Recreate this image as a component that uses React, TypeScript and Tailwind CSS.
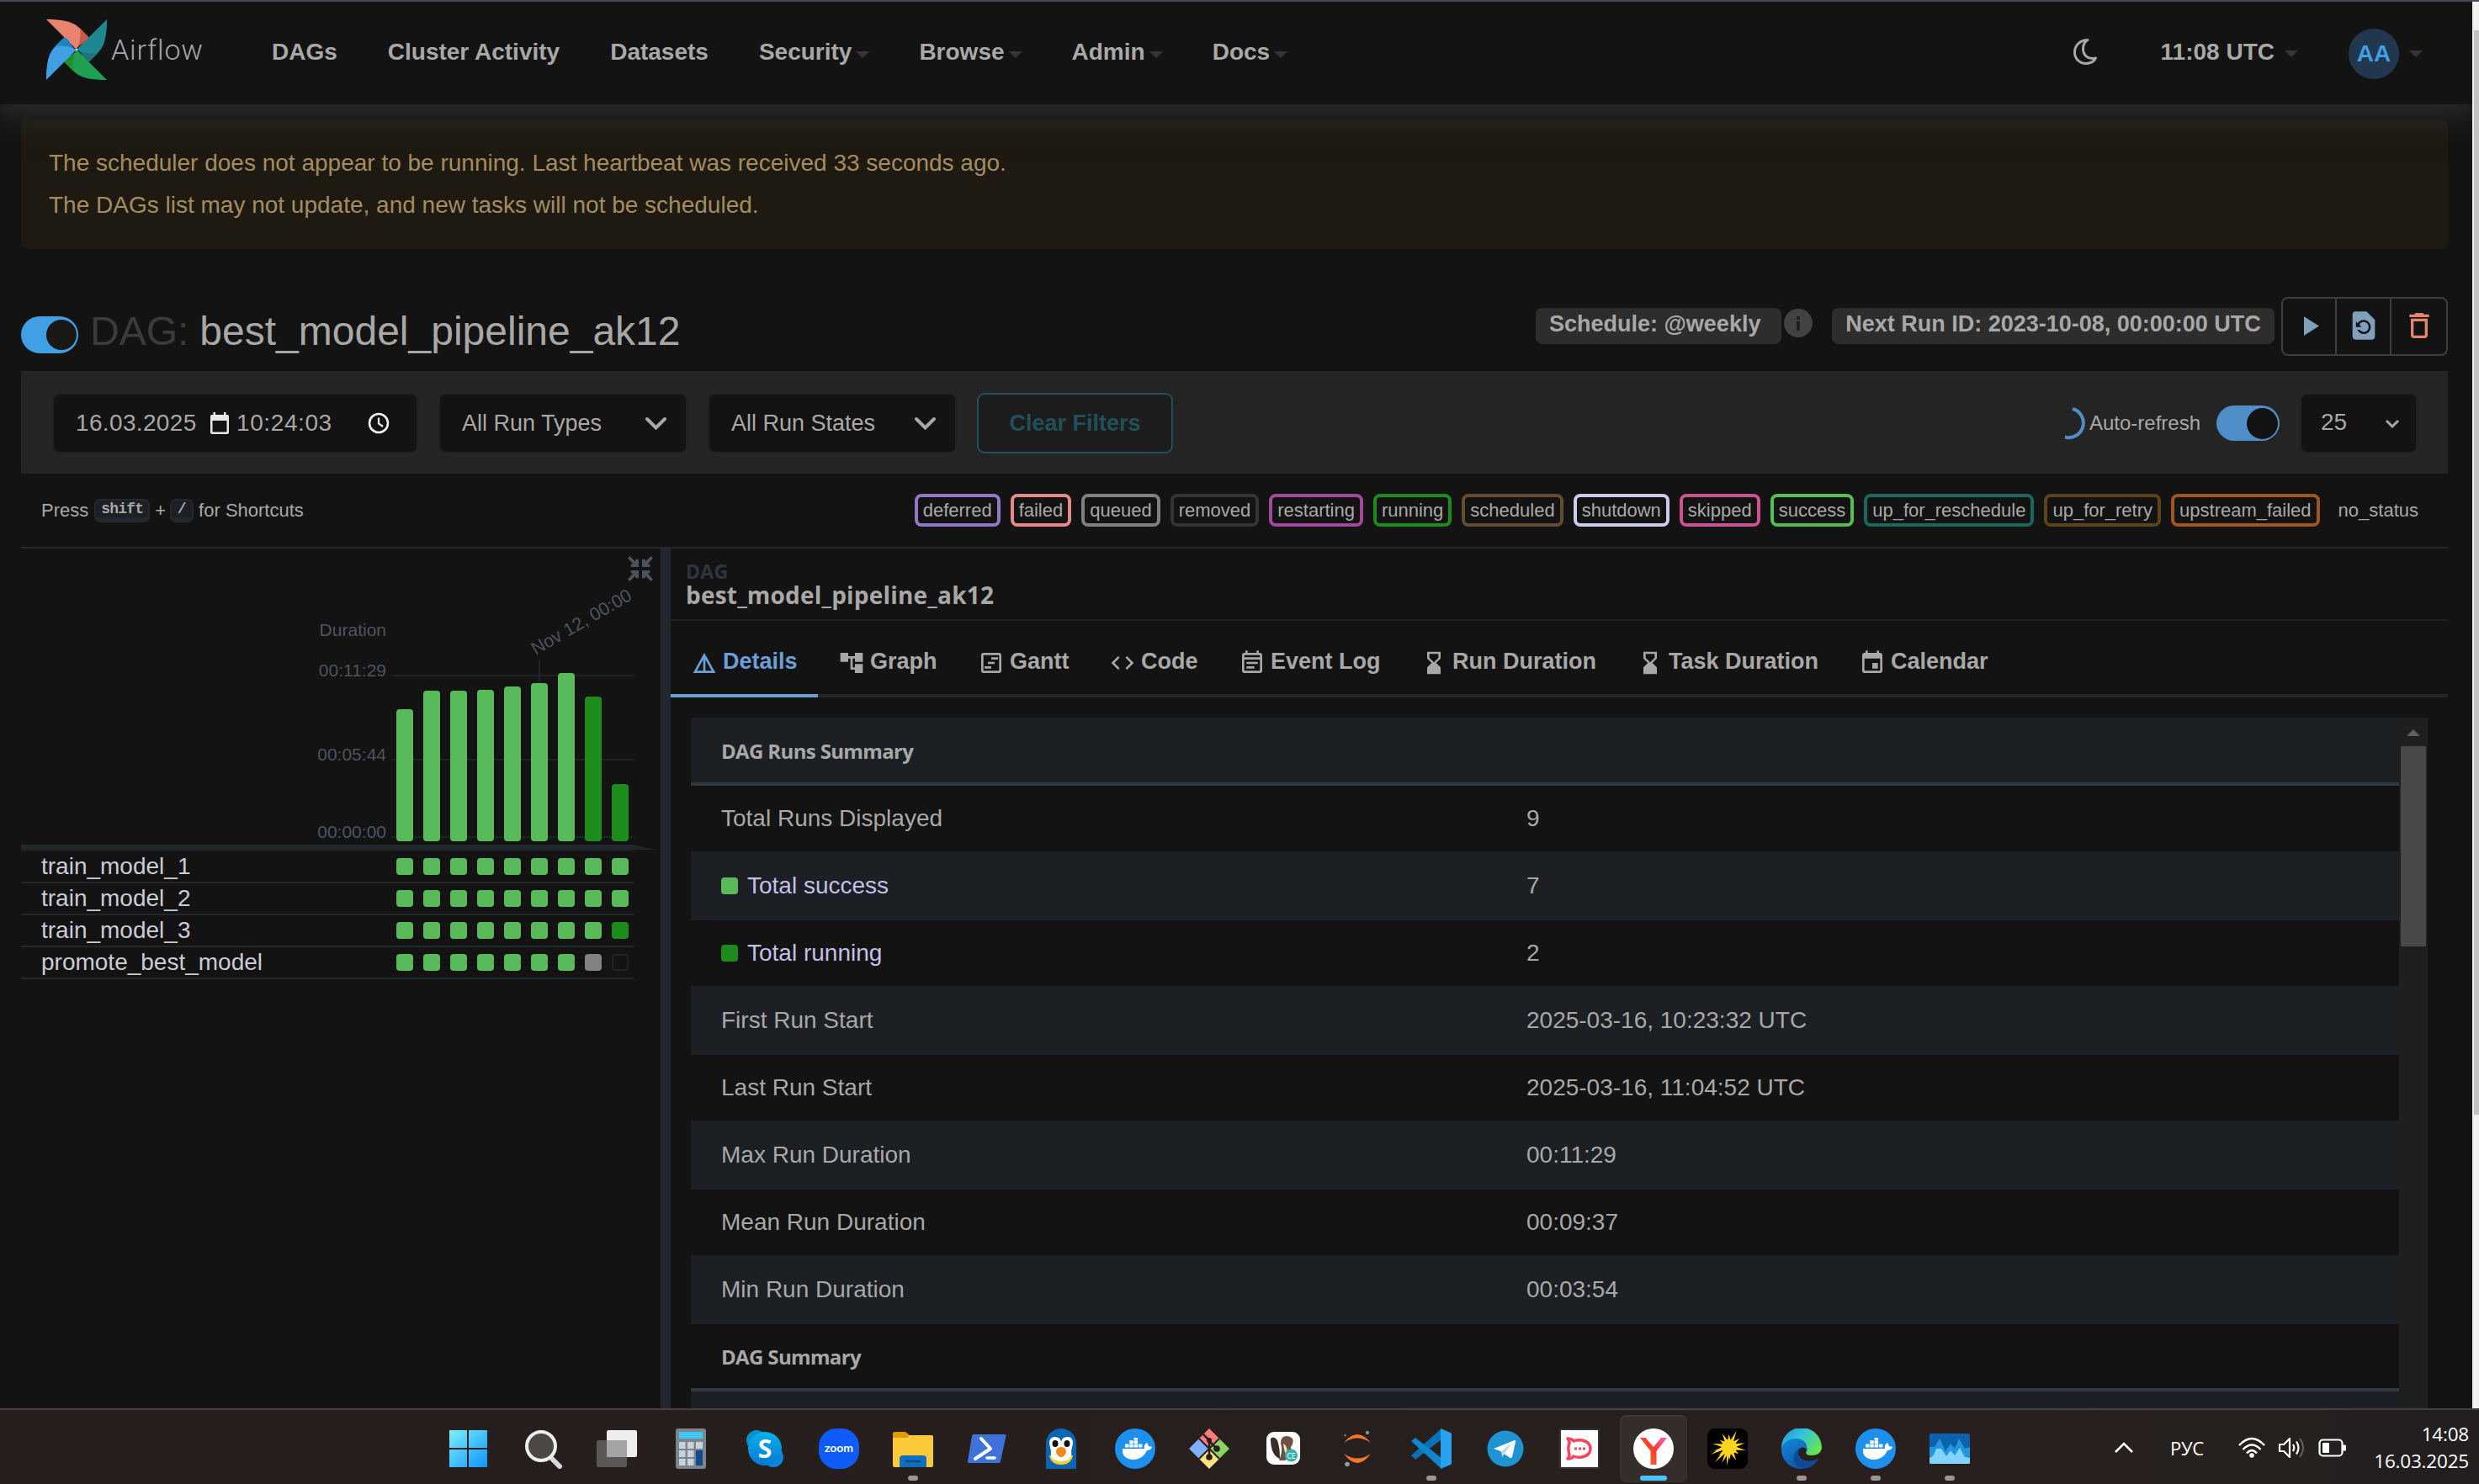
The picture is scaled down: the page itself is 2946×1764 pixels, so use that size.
import React from "react";
import {
  MdPlayArrow,
  MdRestorePage,
  MdDeleteOutline,
  MdDetails,
  MdAccountTree,
  MdOutlineViewTimeline,
  MdCode,
  MdOutlineEventNote,
  MdHourglassBottom,
  MdEvent,
} from "react-icons/md";

const SUCCESS = "#5aba5a";
const RUNNING = "#1e8c1c";

function AirflowLogo() {
  const blade = (light: string, dark: string, angle: number) => (
    <g transform={`rotate(${angle} 36 36)`}>
      <path d="M0 0C18 0 30 2 38 9C44 15 47 18 50 21C50 28 38 28 36 36L21 21Z" fill={light} />
      <path d="M40 10.500C44 14 48 19 50.500 21C50 28 39 28 36 36C40 29 41.500 19 40 10.500Z" fill={dark} />
    </g>
  );
  return (
    <svg className="h-[72px] w-[72px]" viewBox="0 0 72 72">
      {blade("#e8836f", "#c65b46", 0)}
      {blade("#1e8890", "#1d727b", 90)}
      {blade("#1fa052", "#1e8f2c", 180)}
      {blade("#419fe6", "#1f84c6", 270)}
      <circle cx="36" cy="36" r="1.500" fill="#c9c4bd" />
    </svg>
  );
}

function Caret({ className = "" }: { className?: string }) {
  return (
    <span
      className={`h-0 w-0 border-x-8 border-t-8 border-x-transparent border-t-[#3c303e] ${className}`}
    />
  );
}

const NAV = [
  { label: "DAGs", caret: false },
  { label: "Cluster Activity", caret: false },
  { label: "Datasets", caret: false },
  { label: "Security", caret: true },
  { label: "Browse", caret: true },
  { label: "Admin", caret: true },
  { label: "Docs", caret: true },
];

function Header() {
  return (
    <header className="relative z-10 flex h-[122px] w-[2938px] shrink-0 bg-[#131313] shadow-[0_0_40px_8px_#313131] [clip-path:inset(0_0_-80px_0)]">
      <div className="flex h-[118px] items-center pl-[55px] text-[28px] font-bold text-[#a9a8a6]">
        <div className="flex w-[238px] items-center">
          <div className="-mt-1">
            <AirflowLogo />
          </div>
          <span className="-mt-[4px] ml-[5px] font-[Roboto] text-[34px] font-light tracking-[0.800px]">Airflow</span>
        </div>
        <nav className="mt-[2px] flex">
          {NAV.map((n) => (
            <div key={n.label} className="flex items-center px-[30px]">
              {n.label}
              {n.caret && <Caret className="-mr-px ml-[5px] mt-1.5" />}
            </div>
          ))}
        </nav>
      </div>
      <div className="ml-auto flex h-[118px] items-center pr-[59px] text-[28px] font-bold text-[#a9a8a6]">
        <svg className="h-[33px] w-[30px]" viewBox="0 0 30 33">
          <path
            d="M18 2.500C9 2.500 2.500 9 2.500 17C2.500 25 8.500 30.500 16 30.500C21 30.500 25.500 28 27.500 24C18 26.500 12.500 20 12.500 13C12.500 8 14.500 4.500 18 2.500Z"
            fill="none"
            stroke="#a9a8a6"
            strokeWidth="3"
            strokeLinejoin="round"
          />
        </svg>
        <span className="ml-[75px] mt-[2px]">11:08 UTC</span>
        <Caret className="ml-[12px] mt-1.5" />
        <div className="ml-[60px] mt-1.5 flex h-[60px] w-[60px] items-center justify-center rounded-full bg-[#21374e] text-[28px] text-[#419fe6]">
          <span>AA</span>
        </div>
        <Caret className="ml-[12px] mt-1.5" />
      </div>
    </header>
  );
}

function TitleRow() {
  return (
    <div className="flex h-[145px] shrink-0 items-start">
      <div className="mt-[80px] flex h-[44px] w-[68px] items-center justify-end rounded-full bg-[#419fe6] pr-[2px]">
        <div className="h-[36px] w-[36px] rounded-full bg-[#1a1814]" />
      </div>
      <h1 className="ml-[14px] mt-[70px] flex gap-[13px] text-[48px] leading-[56px] text-[#a9a8a6]">
        <span className="text-[#3b3b3b]">DAG:</span>
        <span>best_model_pipeline_ak12</span>
      </h1>
      <div className="ml-auto flex items-start text-[27px] font-bold text-[#a9a8a6]">
        <div className="mt-[70px] flex h-[43px] w-[292px] items-center rounded-[8px] bg-[#2d2d2d] pb-1 pl-[16px]">
          Schedule: @weekly
        </div>
        <div className="ml-[3px] mt-[71px] flex h-[34px] w-[34px] flex-col items-center justify-center gap-[2px] rounded-full bg-[#424242]">
          <span className="h-[4px] w-[4px] bg-[#1f1f1f]" />
          <span className="h-[11px] w-[4px] bg-[#1f1f1f]" />
        </div>
        <div className="ml-[23px] mt-[70px] flex h-[43px] w-[526px] items-center justify-center rounded-[8px] bg-[#2d2d2d] pb-1">
          Next Run ID: 2023-10-08, 00:00:00 UTC
        </div>
        <div className="ml-[8px] mt-[57px] flex h-[70px] w-[198px] divide-x-2 divide-[#3e3e3e] rounded-[8px] border-2 border-[#3e3e3e]">
          <div className="flex w-[64px] items-center justify-center pb-[2px] text-[#7f9fbb]">
            <MdPlayArrow className="h-[39px] w-[39px]" />
          </div>
          <div className="flex w-[65px] items-center justify-center pb-[2px] text-[#7f9fbb]">
            <MdRestorePage className="h-[40px] w-[40px]" />
          </div>
          <div className="flex flex-1 items-center justify-center pb-[2px] text-[#e8836f]">
            <MdDeleteOutline className="h-[40px] w-[40px]" />
          </div>
        </div>
      </div>
    </div>
  );
}

function SelectBox({ label, className }: { label: string; className: string }) {
  return (
    <div
      className={`flex h-[72px] items-center justify-between rounded-[9px] border-2 border-[#1e2328] bg-[#131313] pl-[26px] pr-[22px] text-[27px] ${className}`}
    >
      {label}
      <svg className="h-[17px] w-[27px]" viewBox="0 0 27 17">
        <path d="M3 3L13.500 13.500L24 3" fill="none" stroke="#a9a8a6" strokeWidth="4" strokeLinecap="round" />
      </svg>
    </div>
  );
}

function FilterBar() {
  return (
    <div className="flex h-[122px] shrink-0 items-center border-t-2 border-[#22272c] bg-[#242424] pl-[37px] pr-[36px] text-[28px] text-[#a9a8a6]">
      <div className="flex h-[72px] w-[435px] items-center rounded-[9px] border-2 border-[#1e2328] bg-[#131313] pl-[26px]">
        <span className="w-[160px] tracking-[0.350px]">16.03.2025</span>
        <svg className="h-[26px] w-[22px]" viewBox="0 0 22 26">
          <path d="M2 3H20Q22 3 22 5V24Q22 26 20 26H2Q0 26 0 24V5Q0 3 2 3ZM2.500 10V23.500H19.500V10Z" fillRule="evenodd" fill="#e8e8e8" />
          <path d="M3.500 0H6V4H3.500ZM16 0H18.500V4H16Z" fill="#e8e8e8" />
        </svg>
        <span className="ml-[9px] w-[156px] tracking-[0.600px]">10:24:03</span>
        <svg className="h-[26px] w-[26px]" viewBox="0 0 26 26">
          <circle cx="13" cy="13" r="11" fill="none" stroke="#f0f0f0" strokeWidth="2.600" />
          <path d="M13 6.500V13.500L18 17" fill="none" stroke="#f0f0f0" strokeWidth="2.200" />
        </svg>
      </div>
      <SelectBox label="All Run Types" className="ml-[24px] w-[296px]" />
      <SelectBox label="All Run States" className="ml-[24px] w-[296px]" />
      <button className="ml-[24px] h-[72px] w-[233px] rounded-[9px] border-2 border-[#20525c] bg-[#1c1c1c] text-[27px] font-bold text-[#20505a]">
        Clear Filters
      </button>
      <div className="ml-auto flex items-center">
        <svg className="mr-[4px] h-[40px] w-[30px]" viewBox="0 0 30 40">
          <path d="M14 3A17 17 0 0 1 5 36.500" fill="none" stroke="#4f8ec9" strokeWidth="4" />
        </svg>
        <span className="text-[24px]">Auto-refresh</span>
        <div className="ml-[19px] flex h-[42px] w-[75px] items-center justify-end rounded-full bg-[#4f8ec9] pr-[2px]">
          <div className="h-[37px] w-[37px] rounded-full bg-[#131313]" />
        </div>
        <div className="ml-[24px] flex h-[72px] w-[140px] items-center justify-between rounded-[9px] border-2 border-[#1e2328] bg-[#131313] pb-0.5 pl-[23px] pr-[19px]">
          25
          <svg className="mt-1 h-[12px] w-[18px]" viewBox="0 0 18 12">
            <path d="M2 2L9 9L16 2" fill="none" stroke="#a9a8a6" strokeWidth="3" />
          </svg>
        </div>
      </div>
    </div>
  );
}

const STATES = [
  ["deferred", "border-[#9077c8]"],
  ["failed", "border-[#e78b8a]"],
  ["queued", "border-[#808080]"],
  ["removed", "border-[#343434]"],
  ["restarting", "border-[#a14a9d]"],
  ["running", "border-[#1e8c1c]"],
  ["scheduled", "border-[#644c2f]"],
  ["shutdown", "border-[#cccdec]"],
  ["skipped", "border-[#c9528f]"],
  ["success", "border-[#57bd57]"],
  ["up_for_reschedule", "border-[#1c665b]"],
  ["up_for_retry", "border-[#5e4219]"],
  ["upstream_failed", "border-[#a0561c]"],
  ["no_status", "border-transparent"],
];

function Legend() {
  return (
    <div className="flex h-[87px] shrink-0 items-center pl-[24px] pr-[25px] text-[22px] text-[#a9a8a6]">
      <span>Press</span>
      <kbd className="ml-[7px] flex h-[28px] w-[66px] items-center justify-center rounded-[7px] border-2 border-b-[6px] border-[#22282e] bg-[#1c1f25] font-['Liberation_Mono'] text-[18px] font-bold leading-none tracking-[-0.800px]">
        shift
      </kbd>
      <span className="ml-[6px]">+</span>
      <kbd className="ml-[5px] flex h-[28px] w-[28px] items-center justify-center rounded-[7px] border-2 border-b-[6px] border-[#22282e] bg-[#1c1f25] font-['Liberation_Mono'] text-[18px] font-bold leading-none">
        /
      </kbd>
      <span className="ml-[6px]">for Shortcuts</span>
      <div className="ml-auto flex gap-[12px]">
        {STATES.map(([name, border]) => (
          <span key={name} className={`flex h-[39px] items-center rounded-[8px] border-4 px-[6px] ${border}`}>
            {name}
          </span>
        ))}
      </div>
    </div>
  );
}

const BAR_TOPS = [191, 169, 169, 168, 164, 160, 148, 176, 280];

function DurationChart() {
  return (
    <svg className="block h-[360px] w-[760px] shrink-0 font-['Liberation_Sans']" viewBox="0 0 760 360">
      <g fill="#4a545f">
        {[0, 1, 2, 3].map((i) => (
          <path
            key={i}
            transform={`translate(736 24) scale(${i % 2 ? -1 : 1} ${i > 1 ? -1 : 1})`}
            d="M-15 -12.500L-12.500 -15L-6 -8.500L-6 -11L-2 -11.500V-2H-11.500L-11 -5.500L-8.500 -5.500Z"
          />
        ))}
      </g>
      <g fill="#4b5560" fontSize="21" textAnchor="end">
        <text x="434" y="104">Duration</text>
        <text x="434" y="152">00:11:29</text>
        <text x="434" y="252">00:05:44</text>
        <text x="434" y="344">00:00:00</text>
      </g>
      <text transform="translate(611.500 127) rotate(-30)" fill="#4b5560" fontSize="21.500">
        Nov 12, 00:00
      </text>
      <g fill="#1e2328">
        <rect x="440" y="150" width="288" height="2" />
        <rect x="440" y="250" width="288" height="2" />
        <rect x="440" y="342" width="288" height="2" />
        <rect x="615" y="132" width="2" height="30" />
      </g>
      {BAR_TOPS.map((top, i) => (
        <rect key={i} x={446 + i * 32} y={top} width="20" height={348 - top} rx="4" fill={i < 7 ? SUCCESS : RUNNING} />
      ))}
      <path d="M0 352H728Q745 357 758 358H0Z" fill="#22272e" />
      <rect x="0" y="358" width="728" height="2" fill="#1a1d21" />
    </svg>
  );
}

const G = "bg-[#5aba5a]";
const TASKS = [
  { name: "train_model_1", last: [G, G] },
  { name: "train_model_2", last: [G, G] },
  { name: "train_model_3", last: [G, "bg-[#1e8c1c]"] },
  { name: "promote_best_model", last: ["bg-[#828282]", "border-2 border-[#202327]"] },
];

function GridPanel() {
  return (
    <div className="flex w-[760px] shrink-0 flex-col">
      <DurationChart />
      {TASKS.map((t) => (
        <div key={t.name} className="flex h-[38px] w-[728px] shrink-0 items-center justify-between border-b-2 border-[#22272e] pl-[24px] pr-[6px]">
          <span className="text-[28px] leading-[32px] text-[#cbcbd6]">{t.name}</span>
          <div className="flex gap-[12px]">
            {[G, G, G, G, G, G, G, ...t.last].map((c, i) => (
              <span key={i} className={`h-[20px] w-[20px] rounded-[4px] ${c}`} />
            ))}
          </div>
        </div>
      ))}
    </div>
  );
}

const TABS = [
  { label: "Details", Icon: MdDetails, width: "w-[175px]" },
  { label: "Graph", Icon: MdAccountTree, width: "w-[166px]" },
  { label: "Gantt", Icon: MdOutlineViewTimeline, width: "w-[156px]" },
  { label: "Code", Icon: MdCode, width: "w-[154px]" },
  { label: "Event Log", Icon: MdOutlineEventNote, width: "w-[216px]" },
  { label: "Run Duration", Icon: MdHourglassBottom, width: "w-[257px]" },
  { label: "Task Duration", Icon: MdHourglassBottom, width: "w-[264px]" },
  { label: "Calendar", Icon: MdEvent, width: "w-[203px]" },
];

const ROWS = [
  { label: "Total Runs Displayed", value: "9" },
  { label: "Total success", value: "7", swatch: "bg-[#5aba5a]" },
  { label: "Total running", value: "2", swatch: "bg-[#1e8c1c]" },
  { label: "First Run Start", value: "2025-03-16, 10:23:32 UTC" },
  { label: "Last Run Start", value: "2025-03-16, 11:04:52 UTC" },
  { label: "Max Run Duration", value: "00:11:29" },
  { label: "Mean Run Duration", value: "00:09:37" },
  { label: "Min Run Duration", value: "00:03:54" },
];

function DetailsPanel() {
  return (
    <div className="flex min-w-0 flex-1 flex-col">
      <div className="h-[86px] shrink-0 border-b-2 border-[#1e1f25] pl-[18px] pt-[12px] font-['Open_Sans'] font-bold">
        <div className="text-[23px] leading-[30px] tracking-[0.300px] text-[#2d363e]">DAG</div>
        <div className="-mt-1 text-[28px] leading-[34px] tracking-[0.200px] text-[#a9a8a6]">best_model_pipeline_ak12</div>
      </div>
      <div className="flex h-[91px] shrink-0 border-b-4 border-[#22272e] text-[27px] font-bold text-[#a9a8a6]">
        {TABS.map(({ label, Icon, width }, i) => (
          <div
            key={label}
            className={`flex h-[91px] shrink-0 items-center border-b-4 pl-[24px] pt-[10px] ${width} ${
              i === 0 ? "border-[#6a9fd8] text-[#6a9fd8]" : "border-transparent"
            }`}
          >
            <Icon className="mt-[3px] h-[32px] w-[32px] shrink-0" />
            <span className="ml-[6px] whitespace-nowrap">{label}</span>
          </div>
        ))}
      </div>
      <div className="flex min-h-0 flex-1 pl-[24px] pr-[24px] pt-[24px]">
        <div className="flex min-w-0 flex-1 flex-col overflow-hidden text-[28px] text-[#a9a8a6]">
          <div className="flex h-[81px] shrink-0 items-center border-b-4 border-[#303840] bg-[#1c1f24] pl-[36px] pt-[2px] font-['Open_Sans'] text-[24px] font-bold tracking-[-0.650px]">
            DAG Runs Summary
          </div>
          {ROWS.map((r, i) => (
            <div
              key={r.label}
              className={`flex h-[80px] shrink-0 items-center border-b-2 border-[#1c1f24] pl-[36px] ${i % 2 ? "bg-[#1c1f24]" : ""}`}
            >
              <div className={`flex w-[957px] items-center ${r.swatch ? "text-[#c3bfe8]" : ""}`}>
                {r.swatch && <span className={`mr-[11px] h-[20px] w-[20px] rounded-[4px] ${r.swatch}`} />}
                {r.label}
              </div>
              <div>{r.value}</div>
            </div>
          ))}
          <div className="flex h-[80px] shrink-0 items-center border-b-4 border-[#303840] pl-[36px] pt-[2px] font-['Open_Sans'] text-[24px] font-bold tracking-[-0.650px]">
            DAG Summary
          </div>
          <div className="h-[80px] shrink-0 bg-[#1c1f24]" />
        </div>
        <div className="flex w-[34px] shrink-0 flex-col items-center bg-[#1f1f1f]">
          <span className="mt-[14px] h-0 w-0 border-x-8 border-b-8 border-x-transparent border-b-[#606060]" />
          <span className="mt-[12px] h-[238px] w-[30px] bg-[#494949]" />
        </div>
      </div>
    </div>
  );
}

function Whale() {
  return (
    <svg viewBox="0 0 48 48">
      <circle cx="24" cy="24" r="24" fill="#1d90ee" />
      <path d="M9 24H35Q34 19 38 17Q40 19 40 21.500Q43 20.500 44 22.500Q42 26 38 26C35 33 29 37 22 37C13 37 8 32 9 24Z" fill="#fff" />
      <path d="M12 18.500h4.500v4H12zM17.300 18.500h4.500v4h-4.500zM22.600 18.500h4.500v4h-4.500zM27.900 18.500h4.500v4h-4.500zM17.300 14.300h4.500v3.600h-4.500zM22.600 14.300h4.500v3.600h-4.500zM22.600 11h4.500v2.700h-4.500z" fill="#fff" />
    </svg>
  );
}

const rays = Array.from({ length: 14 }, (_, i) => {
  const a = (i / 14) * Math.PI * 2 + 0.2;
  const r = [20, 14, 18, 15, 21, 16, 19][i % 7];
  const p = (ang: number, rad: number) => `${(26 + Math.cos(ang) * rad).toFixed(1)} ${(22 + Math.sin(ang) * rad).toFixed(1)}`;
  return `M${p(a - 0.3, 7)}L${p(a, r)}L${p(a + 0.3, 7)}Z`;
}).join("");

const APPS: { name: string; running?: boolean; active?: boolean; icon: React.ReactNode }[] = [
  {
    name: "Start",
    icon: (
      <svg viewBox="0 0 48 48">
        <defs>
          <linearGradient id="win" x1="0" y1="0" x2="1" y2="1">
            <stop offset="0" stopColor="#7df0fc" />
            <stop offset="1" stopColor="#0d94fa" />
          </linearGradient>
        </defs>
        <path d="M1 2H22V23H1ZM24 2H46V23H24ZM1 25H22V46H1ZM24 25H46V46H24Z" fill="url(#win)" />
      </svg>
    ),
  },
  {
    name: "Search",
    icon: (
      <svg viewBox="0 0 48 48">
        <path d="M34 35L44 45" stroke="#d5d8da" strokeWidth="6" strokeLinecap="round" />
        <circle cx="22" cy="21" r="17" fill="#4c4644" stroke="#eceeef" strokeWidth="4" />
      </svg>
    ),
  },
  {
    name: "Task view",
    icon: (
      <svg viewBox="0 0 48 48">
        <rect x="0" y="14" width="36" height="32" rx="2" fill="#5b5857" />
        <rect x="12" y="2" width="36" height="32" rx="2" fill="#eeeeee" />
        <path d="M12 14H36V34H14Q12 34 12 32Z" fill="#a5a4a4" />
      </svg>
    ),
  },
  {
    name: "Calculator",
    icon: (
      <svg viewBox="0 0 48 48">
        <rect x="6" width="36" height="48" rx="3" fill="#7c848d" />
        <rect x="10" y="4" width="28" height="8" rx="1" fill="#3fc8f5" />
        <path d="M10 16h7.500v8H10zM20 16h7.500v8H20zM30 16h8v8h-8zM10 26h7.500v8H10zM20 26h7.500v8H20zM10 36h7.500v8H10zM20 36h7.500v8H20z" fill="#c9d3dd" />
        <rect x="30" y="26" width="8" height="18" rx="1" fill="#0f4a8a" />
      </svg>
    ),
  },
  {
    name: "Skype",
    icon: (
      <svg viewBox="0 0 48 48">
        <defs>
          <linearGradient id="sky" x1="0" y1="0" x2="0" y2="1">
            <stop offset="0" stopColor="#07b3ea" />
            <stop offset="1" stopColor="#0579d4" />
          </linearGradient>
        </defs>
        <circle cx="14" cy="14" r="12" fill="#0a8fd0" />
        <circle cx="34" cy="34" r="12" fill="#0a86dc" />
        <circle cx="24" cy="24" r="20" fill="url(#sky)" />
        <text x="24" y="35" textAnchor="middle" fontSize="30" fontWeight="bold" fontFamily="Open Sans" fill="#fff">S</text>
      </svg>
    ),
  },
  {
    name: "Zoom",
    icon: (
      <svg viewBox="0 0 48 48">
        <rect width="48" height="48" rx="21" fill="#0f5cfa" />
        <text x="24" y="27.500" textAnchor="middle" fontSize="14" fontWeight="bold" fontFamily="Lato" fill="#fff">zoom</text>
      </svg>
    ),
  },
  {
    name: "File Explorer",
    running: true,
    icon: (
      <svg viewBox="0 0 48 48">
        <path d="M0 6Q0 4 2 4H15L20 8V14H0Z" fill="#dc9b05" />
        <path d="M0 11H17L20 8H46Q48 8 48 10V44Q48 46 46 46H2Q0 46 0 44Z" fill="#fcc93a" />
        <path d="M8 46V36Q8 32 12 32H36Q40 32 40 36V46Z" fill="#0f6fbf" />
        <path d="M15 39H33" stroke="#0a4c87" strokeWidth="2.500" />
      </svg>
    ),
  },
  {
    name: "PowerShell",
    icon: (
      <svg viewBox="0 0 48 48">
        <path d="M8 7H45Q47 7 46.500 9L40 39Q39.500 41 38 41H2Q0.500 41 1 39L6 9Q6.500 7 8 7Z" fill="#3f73d8" />
        <path d="M17 12L28 24L10 36" fill="none" stroke="#fff" strokeWidth="4" strokeLinejoin="round" strokeLinecap="round" />
        <path d="M24 35H33" stroke="#fff" strokeWidth="3.500" strokeLinecap="round" />
      </svg>
    ),
  },
  {
    name: "Penguin",
    icon: (
      <svg viewBox="0 0 48 48">
        <path d="M6 48V18A18 18 0 0 1 42 18V48Z" fill="#0a66b5" />
        <path d="M10 32Q12 43 24 43Q36 43 38 32Z" fill="#f8cf2e" />
        <path d="M10 18Q10 10 16.500 10Q23 10 24 16Q25 10 31.500 10Q38 10 38 18L36 27Q38 39 24 39Q10 39 12 27Z" fill="#fff" />
        <ellipse cx="17" cy="18" rx="3.500" ry="4" fill="#111" />
        <ellipse cx="31" cy="18" rx="3.500" ry="4" fill="#111" />
        <path d="M24 22Q30 22 30 28Q28 34 24 34Q20 34 18 28Q18 22 24 22Z" fill="#f28a1b" />
      </svg>
    ),
  },
  { name: "Docker", icon: <Whale /> },
  {
    name: "Git",
    icon: (
      <svg viewBox="0 0 48 48">
        <path d="M24 0L36 12L24 24L12 12Z" fill="#fb7c7d" />
        <path d="M12 12L24 24L12 36L0 24Z" fill="#80b0fb" />
        <path d="M36 12L48 24L36 36L24 24Z" fill="#8bd45f" />
        <path d="M24 24L36 36L24 48L12 36Z" fill="#fce27c" />
        <path d="M12 12L36 36M36 12L12 36" stroke="#281f1e" strokeWidth="2" />
        <path d="M17 7L24 14V34M24 15L33 24" fill="none" stroke="#2a1d1d" strokeWidth="2.500" />
        <circle cx="24" cy="14" r="3" fill="#2a1d1d" />
        <circle cx="33" cy="24" r="3.800" fill="#2a1d1d" />
        <circle cx="24" cy="34" r="3.800" fill="#2a1d1d" />
      </svg>
    ),
  },
  {
    name: "DBeaver",
    icon: (
      <svg viewBox="0 0 48 48">
        <rect x="4" y="4" width="40" height="39" rx="9" fill="#fff" />
        <path d="M9 12Q13 8 17 14Q20 22 20 36Q9 32 9 12Z" fill="#3a2c28" />
        <path d="M24 10Q30 7 35 12Q37 17 33 22Q36 32 26 38H19Q24 26 21 18Q21 12 24 10Z" fill="#6d5243" />
        <path d="M24 18Q30 20 28 32Q25 28 24 18Z" fill="#e9dccb" />
        <circle cx="33.500" cy="32" r="7.500" fill="#38b0ac" />
        <text x="33.500" y="35.500" textAnchor="middle" fontSize="9" fontFamily="Open Sans" fill="#fff">CE</text>
      </svg>
    ),
  },
  {
    name: "Jupyter",
    icon: (
      <svg viewBox="0 0 48 48">
        <path d="M8 17Q24 -3 40 17Q24 6 8 17Z" fill="#f37726" />
        <path d="M8 30Q24 52 40 30Q24 41 8 30Z" fill="#f37726" />
        <circle cx="36" cy="5" r="2.200" fill="#8c8c8c" />
        <circle cx="9.500" cy="8" r="1.500" fill="#6b6b6b" />
        <circle cx="12" cy="42.500" r="2.800" fill="#9c9c9c" />
      </svg>
    ),
  },
  {
    name: "Visual Studio Code",
    running: true,
    icon: (
      <svg viewBox="0 0 48 48">
        <path d="M36 0L0 32L5 37L36 13Z" fill="#0a70b8" />
        <path d="M0 15L5 11L36 35V48Z" fill="#0d86ce" />
        <path d="M35 0L48 5.500V42.500L35 48Z" fill="#26a2ee" />
      </svg>
    ),
  },
  {
    name: "Telegram",
    icon: (
      <svg viewBox="0 0 48 48">
        <circle cx="24" cy="24" r="21.500" fill="#1f94d2" />
        <path d="M10 24L35 14Q36.500 13.500 36 16L32 34Q31 36 29 34.500L17 26.500Z" fill="#fff" />
        <path d="M32 17L19 27L20 34L23 30" fill="#c3d9e8" />
      </svg>
    ),
  },
  {
    name: "Rocket.Chat",
    icon: (
      <svg viewBox="0 0 48 48">
        <rect width="48" height="48" fill="#323338" />
        <rect x="2" y="2" width="44" height="44" fill="#fff" />
        <path d="M10 12Q15 12 17 15Q22 13 27 14Q37 16 37 24Q37 32 27 34Q22 35 17 33Q15 36 10 36Q13 32 11.500 29Q10 24 11.500 19Q13 16 10 12Z" fill="none" stroke="#f5455c" strokeWidth="3.500" strokeLinejoin="round" />
        <path d="M18 22.500h3v3h-3zM23 22.500h3v3h-3zM28 22.500h3v3h-3z" fill="#f5455c" />
      </svg>
    ),
  },
  {
    name: "Yandex Browser",
    active: true,
    icon: (
      <svg viewBox="0 0 48 48">
        <defs>
          <linearGradient id="yb" x1="1" y1="0" x2="0" y2="0.700">
            <stop offset="0" stopColor="#fb5fd0" />
            <stop offset="0.500" stopColor="#fb3a2c" />
            <stop offset="1" stopColor="#fc6a2c" />
          </linearGradient>
        </defs>
        <circle cx="24" cy="24" r="24" fill="#fff" />
        <path d="M8 11H14.500L24 22L33 11H40L27.500 27V43H20.500V27Z" fill="url(#yb)" />
      </svg>
    ),
  },
  {
    name: "Spark",
    icon: (
      <svg viewBox="0 0 48 48">
        <rect width="48" height="48" rx="9" fill="#000" />
        <circle cx="26" cy="22" r="9" fill="#fcd51c" />
        <path d={rays} fill="#fcd51c" />
        <path d="M20 20L4 31L20 25L9 40L23 28L23 44L27 28Z" fill="#fcd51c" />
      </svg>
    ),
  },
  {
    name: "Edge",
    running: true,
    icon: (
      <svg viewBox="0 0 48 48">
        <defs>
          <linearGradient id="ed1" x1="0" y1="0" x2="1" y2="0.600">
            <stop offset="0" stopColor="#1c8fd8" />
            <stop offset="0.500" stopColor="#36c5d8" />
            <stop offset="1" stopColor="#63e355" />
          </linearGradient>
          <linearGradient id="ed2" x1="0" y1="0" x2="0.600" y2="1">
            <stop offset="0" stopColor="#1288dc" />
            <stop offset="1" stopColor="#0f52a3" />
          </linearGradient>
        </defs>
        <path d="M0 24A24 24 0 0 1 48 22C48 29 42 32 36 32C30 32 28 30 30 27C32 22 27 16 20 16C10 14 3 18 0 24Z" fill="url(#ed1)" />
        <path d="M0 24C2 16 10 12 18 12C26 12 32 18 30 26C28 20 20 22 20 29C20 37 30 42 44 36C39 44 32 48 24 48C10 48 0 38 0 24Z" fill="url(#ed2)" />
        <path d="M20 29C20 37 30 42 44 36C38 47 26 50 18 44C12 38 14 28 22 23C20 25 20 27 20 29Z" fill="#104a94" />
      </svg>
    ),
  },
  { name: "Docker Desktop", running: true, icon: <Whale /> },
  {
    name: "Monitor",
    running: true,
    icon: (
      <svg viewBox="0 0 48 48">
        <rect y="6" width="48" height="36" rx="2" fill="#0d62ae" />
        <path d="M0 22L6 22L12 12L19 27L25 18L30 24L35 12L42 24L48 22V42H0Z" fill="#2296de" />
        <path d="M0 35Q5 34 8 24H14L20 33L25 26L30 32L36 23L42 34L48 35V40Q48 42 46 42H2Q0 42 0 40Z" fill="#84d3fa" />
      </svg>
    ),
  },
];

function Taskbar() {
  return (
    <footer className="flex h-[90px] shrink-0 border-t-2 border-[#464140] bg-[linear-gradient(90deg,#261f1e_0,#281f1e_2450px,#26211e_2600px,#26211e_2750px,#231f20_2800px)] font-['Open_Sans'] text-white">
      <div className="ml-[517px] mt-[6px] flex gap-[8px]">
        {APPS.map((a) => (
          <div
            key={a.name}
            className={`flex h-[80px] w-[80px] flex-col items-center rounded-[8px] pt-[16px] ${
              a.active ? "bg-[#352d2c] shadow-[inset_0_2px_0_#3e3736,inset_0_0_0_1px_#3a3332]" : ""
            }`}
          >
            <div className="h-[48px] w-[48px]">{a.icon}</div>
            {a.active && <span className="mt-[8px] h-[6px] w-[32px] rounded-full bg-[#4cc2ff]" />}
            {a.running && <span className="mt-[8px] h-[6px] w-[12px] rounded-full bg-[#9b9594]" />}
          </div>
        ))}
      </div>
      <div className="ml-auto flex h-[88px] items-center pr-[12px] pt-[2px]">
        <svg className="h-[16px] w-[24px]" viewBox="0 0 24 16">
          <path d="M2 13L12 3L22 13" fill="none" stroke="#fff" strokeWidth="2.500" />
        </svg>
        <span className="ml-[43px] w-[42px] text-[22px] tracking-[-0.300px]">РУС</span>
        <svg className="ml-[38px] h-[28px] w-[34px]" viewBox="0 0 34 28" fill="none" stroke="#fff" strokeWidth="2.500">
          <path d="M2 11Q17 -5 32 11M6.500 16Q17 5 27.500 16M11 20.500Q17 13.500 23 20.500" />
          <circle cx="17" cy="23" r="2.800" fill="#fff" stroke="none" />
        </svg>
        <svg className="ml-[14px] h-[30px] w-[34px]" viewBox="0 0 34 30" fill="none" stroke="#fff" strokeWidth="2.200" strokeLinejoin="round">
          <path d="M2 11H7L14 4V26L7 19H2Z" />
          <path d="M18 11Q20.500 15 18 19M22 7.500Q27 15 22 22.500" />
          <path d="M26 4Q34 15 26 26" stroke="#5f5a58" />
        </svg>
        <svg className="ml-[14px] h-[22px] w-[34px]" viewBox="0 0 34 22">
          <rect x="1.500" y="1.500" width="27" height="19" rx="4" fill="none" stroke="#fff" strokeWidth="2.200" />
          <rect x="5" y="5" width="8" height="12" rx="1" fill="#fff" />
          <path d="M29 7.500H32Q33 7.500 33 9V13Q33 14.500 32 14.500H29Z" fill="#fff" />
        </svg>
        <div className="ml-[21px] w-[124px] text-right text-[22.500px] leading-[32px] tracking-[-0.200px]">
          <div>14:08</div>
          <div>16.03.2025</div>
        </div>
      </div>
    </footer>
  );
}

export default function App() {
  return (
    <div className="flex h-[1764px] w-[2946px] flex-col overflow-hidden bg-[#131313] font-['Liberation_Sans',Arial,sans-serif]">
      <div className="h-[2px] shrink-0 bg-[#4b4958]" />
      <div className="flex h-[1672px] shrink-0">
        <div className="flex w-[2938px] shrink-0 flex-col">
          <Header />
          <main className="flex min-h-0 flex-1 flex-col pl-[25px] pr-[29px]">
            <div className="mt-[18px] h-[154px] shrink-0 rounded-[8px] bg-[#1e1a12] pl-[33px] pt-[27px] text-[28px] leading-[50px] text-[#a48c60]">
              <p>The scheduler does not appear to be running. Last heartbeat was received 33 seconds ago.</p>
              <p>The DAGs list may not update, and new tasks will not be scheduled.</p>
            </div>
            <TitleRow />
            <FilterBar />
            <Legend />
            <div className="flex min-h-0 flex-1 border-t-2 border-[#22272e]">
              <GridPanel />
              <div className="w-[12px] shrink-0 bg-[#22272e]" />
              <DetailsPanel />
            </div>
          </main>
        </div>
        <div className="flex w-[8px] shrink-0 flex-col bg-[#f0f0f0] pl-[2px] pt-[34px]">
          <div className="h-[1289px] bg-[#c1c1c1]" />
        </div>
      </div>
      <Taskbar />
    </div>
  );
}
